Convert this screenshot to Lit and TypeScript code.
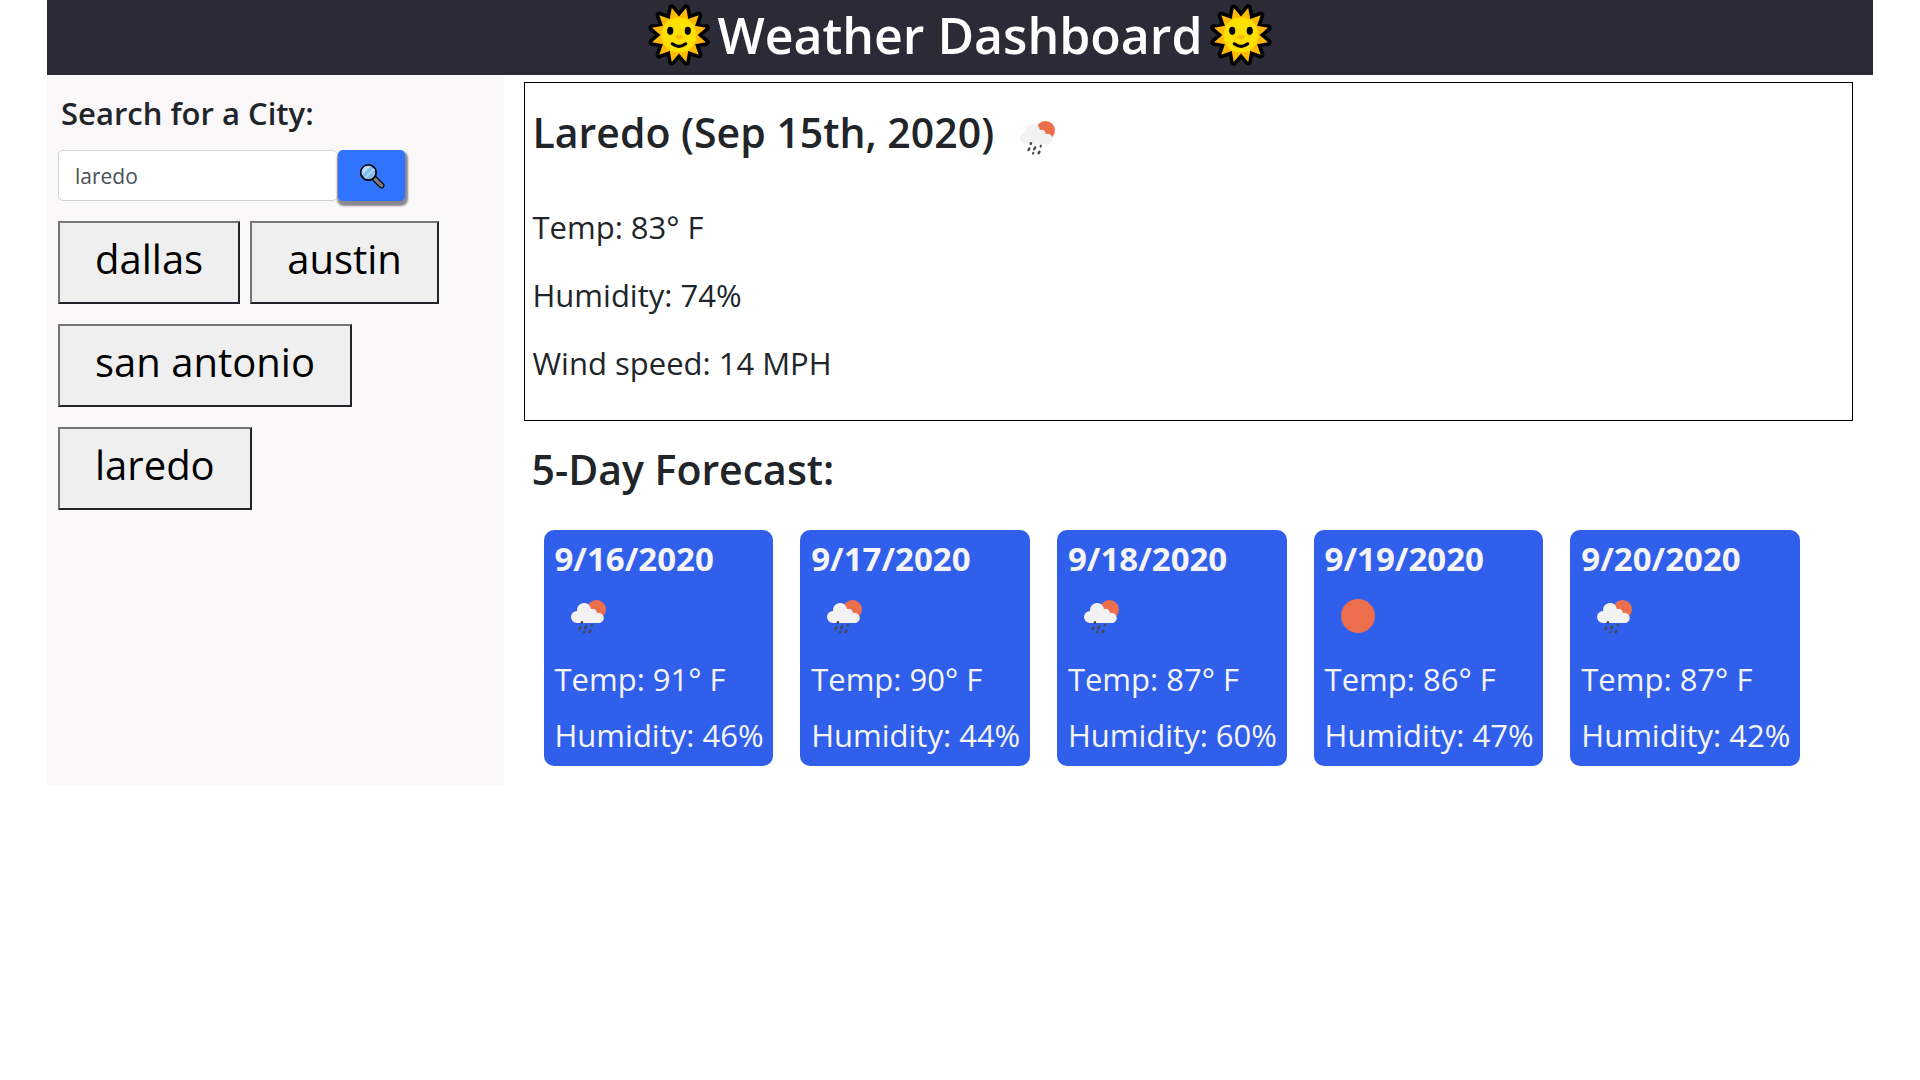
import { LitElement, html, css, svg } from "lit";
import { customElement, property, state } from "lit/decorators.js";

type Sky = "rain" | "clear";

interface Day {
  date: string;
  sky: Sky;
  temp: number;
  humidity: number;
}

const DAYS: Day[] = [
  { date: "9/16/2020", sky: "rain", temp: 91, humidity: 46 },
  { date: "9/17/2020", sky: "rain", temp: 90, humidity: 44 },
  { date: "9/18/2020", sky: "rain", temp: 87, humidity: 60 },
  { date: "9/19/2020", sky: "clear", temp: 86, humidity: 47 },
  { date: "9/20/2020", sky: "rain", temp: 87, humidity: 42 },
];

// Twelve pointed rays around a centre at 0,0.
const RAYS = Array.from({ length: 24 }, (_, i) => {
  const radius = i % 2 === 0 ? 27 : 18;
  const angle = ((i * 15 + 15) * Math.PI) / 180;
  return `${(radius * Math.cos(angle)).toFixed(1)},${(radius * Math.sin(angle)).toFixed(1)}`;
}).join(" ");

@customElement("sun-face")
export class SunFace extends LitElement {
  static styles = css`
    :host {
      display: block;
      flex: none;
      line-height: 0;
    }
    .sun {
      width: 64px;
      height: 64px;
    }
  `;

  render() {
    return html`<svg class="sun" viewBox="-31 -31 62 62" aria-hidden="true">
      <polygon points=${RAYS} fill="#000" stroke="#000" stroke-width="7" stroke-linejoin="round" />
      <polygon points=${RAYS} fill="#ffb900" />
      <circle r="17" fill="#ffe100" />
      <path d="M-3.5 0.5 H3.5 A3.5 3.5 0 0 1 -3.5 0.5Z" fill="#ffb900" />
      <ellipse cx="-8.5" cy="-4" rx="3" ry="4" fill="#000" />
      <ellipse cx="8.5" cy="-4" rx="3" ry="4" fill="#000" />
      <path d="M-6.5 8.5 Q0 13.5 6.5 8.5" fill="none" stroke="#000" stroke-width="3" stroke-linecap="round" />
    </svg>`;
  }
}

@customElement("sky-icon")
export class SkyIcon extends LitElement {
  @property() sky: Sky = "rain";

  static styles = css`
    :host {
      display: block;
      line-height: 0;
    }
    .icon {
      width: 50px;
      height: 50px;
    }
  `;

  render() {
    const rain = svg`
      <circle cx="33.5" cy="18.5" r="9.5" fill="#ec6e4c" />
      <path d="M25 20 L29 17 Q33 17 34 21 Q36 22 38 25 L34 29 L25 27Z" fill="#f0603c" />
      <path d="M14 32 A6 6 0 0 1 14 20 A7 7 0 0 1 28 18 Q33 17 34 22 A5 5 0 0 1 37 32Z" fill="#f2f2f2" />
      <g stroke="#484848" stroke-width="2.4" stroke-linecap="round">
        <path d="M19 31.2 L18.7 32" /><path d="M17.3 36.6 L16.5 38" />
        <path d="M23.2 35.4 L22.2 37.2" /><path d="M28.9 33.6 L28.5 34.6" stroke-width="2" />
        <path d="M21.4 40.8 L21 41.6" stroke-width="2" /><path d="M27.4 39.8 L26.6 41.2" />
      </g>`;
    const clear = svg`<circle cx="25" cy="25" r="17" fill="#ec6e4c" />`;
    return html`<svg class="icon" viewBox="0 0 50 50" role="img" aria-label=${this.sky}>
      ${this.sky === "rain" ? rain : clear}
    </svg>`;
  }
}

@customElement("app-root")
export class AppRoot extends LitElement {
  @state() private cities = ["dallas", "austin", "san antonio", "laredo"];

  static styles = css`
    :host {
      display: block;
      padding: 0 47px;
      background: #fff;
      color: #212529;
      font-family: "Segoe UI", "Open Sans", "Noto Sans", sans-serif;
      font-size: 31px;
      line-height: 48px;
    }
    * {
      box-sizing: border-box;
    }
    h1,
    h2,
    h3,
    p {
      margin: 0;
      font-weight: 600;
    }
    p {
      font-weight: 400;
    }
    .banner {
      display: flex;
      align-items: center;
      justify-content: center;
      gap: 6px;
      height: 75px;
      padding-bottom: 5px;
      background: #2b2a36;
      color: #fff;
    }
    .banner h1 {
      font-size: 50px;
      line-height: 70px;
    }
    .layout {
      display: grid;
      grid-template-columns: 1fr 3fr;
    }
    .sidebar {
      padding: 14px 11px;
      background: #faf8f9;
    }
    .label {
      display: block;
      padding: 0 3px;
      font-weight: 600;
    }
    .search {
      display: flex;
      margin: 13px 0 20px;
    }
    .query {
      width: 280px;
      height: 51px;
      padding: 0 16px;
      border: 1px solid #ced4da;
      border-radius: 5px;
      background: #fff;
      color: #495057;
      font-family: inherit;
      font-size: 21px;
    }
    .go {
      display: grid;
      place-items: center;
      width: 67px;
      height: 51px;
      padding: 0;
      border: 0;
      border-radius: 5px;
      background: #3074ff;
      box-shadow: 1px 3px 2px 2px #8b8790;
    }
    .glass {
      width: 26px;
      height: 26px;
    }
    .cities {
      display: flex;
      flex-wrap: wrap;
      gap: 20px 10px;
    }
    .city {
      padding: 1px 35px 8px;
      border: 2px solid;
      border-color: #767676 #212529 #212529 #767676;
      background: #efefef;
      color: #000;
      font-family: inherit;
      font-size: 40px;
      line-height: 70px;
    }
    .main {
      padding: 7px 20px 19px;
    }
    .today {
      display: flex;
      flex-direction: column;
      gap: 20px;
      padding: 19px 8px 33px;
      border: 1px solid #000;
    }
    .place {
      display: flex;
      align-items: flex-end;
      gap: 18px;
      padding-bottom: 21px;
    }
    .place h2,
    .outlook {
      font-size: 41px;
      line-height: 60px;
    }
    .outlook {
      padding: 18px 8px 31px;
    }
    .days {
      display: grid;
      grid-template-columns: repeat(5, 1fr);
      gap: 27px;
      padding: 0 53px 0 20px;
    }
    .day {
      display: flex;
      flex-direction: column;
      gap: 8px;
      padding: 5px 0 7px 11px;
      border-radius: 10px;
      background: #305fec;
      color: #f5f5f7;
      white-space: nowrap;
    }
    .day h3 {
      font-size: 33px;
      font-weight: 700;
    }
    .day sky-icon {
      padding: 0 8px 6px;
    }
  `;

  render() {
    return html`
      <header class="banner">
        <sun-face></sun-face>
        <h1>Weather Dashboard</h1>
        <sun-face></sun-face>
      </header>
      <div class="layout">
        <aside class="sidebar">
          <label class="label" for="query">Search for a City:</label>
          <div class="search">
            <input class="query" id="query" type="text" value="laredo" />
            <button class="go" type="button" aria-label="Search">
              <svg class="glass" viewBox="0 0 26 26" aria-hidden="true">
                <path d="M15 15 L22.5 22.5" stroke="#000" stroke-width="6" stroke-linecap="round" />
                <path d="M16 16 L22.5 22.5" stroke="#7a7a7a" stroke-width="3.5" stroke-linecap="round" />
                <circle cx="9.5" cy="9.5" r="7.7" fill="#83beec" stroke="#000" stroke-width="1.8" />
                <path d="M3 12 L12 3 Q6 1.5 3.5 6 Q2 9 3 12Z" fill="#b4dcf7" />
                <path d="M6 15 L15.5 6" stroke="#a3d2f3" stroke-width="2" />
              </svg>
            </button>
          </div>
          <div class="cities">
            ${this.cities.map((city) => html`<button class="city" type="button">${city}</button>`)}
          </div>
        </aside>
        <main class="main">
          <section class="today">
            <div class="place">
              <h2>Laredo (Sep 15th, 2020)</h2>
              <sky-icon sky="rain"></sky-icon>
            </div>
            <p>Temp: 83° F</p>
            <p>Humidity: 74%</p>
            <p>Wind speed: 14 MPH</p>
          </section>
          <h2 class="outlook">5-Day Forecast:</h2>
          <section class="days">
            ${DAYS.map(
              (day) => html`<article class="day">
                <h3>${day.date}</h3>
                <sky-icon .sky=${day.sky}></sky-icon>
                <p>Temp: ${day.temp}° F</p>
                <p>Humidity: ${day.humidity}%</p>
              </article>`,
            )}
          </section>
        </main>
      </div>
    `;
  }
}
